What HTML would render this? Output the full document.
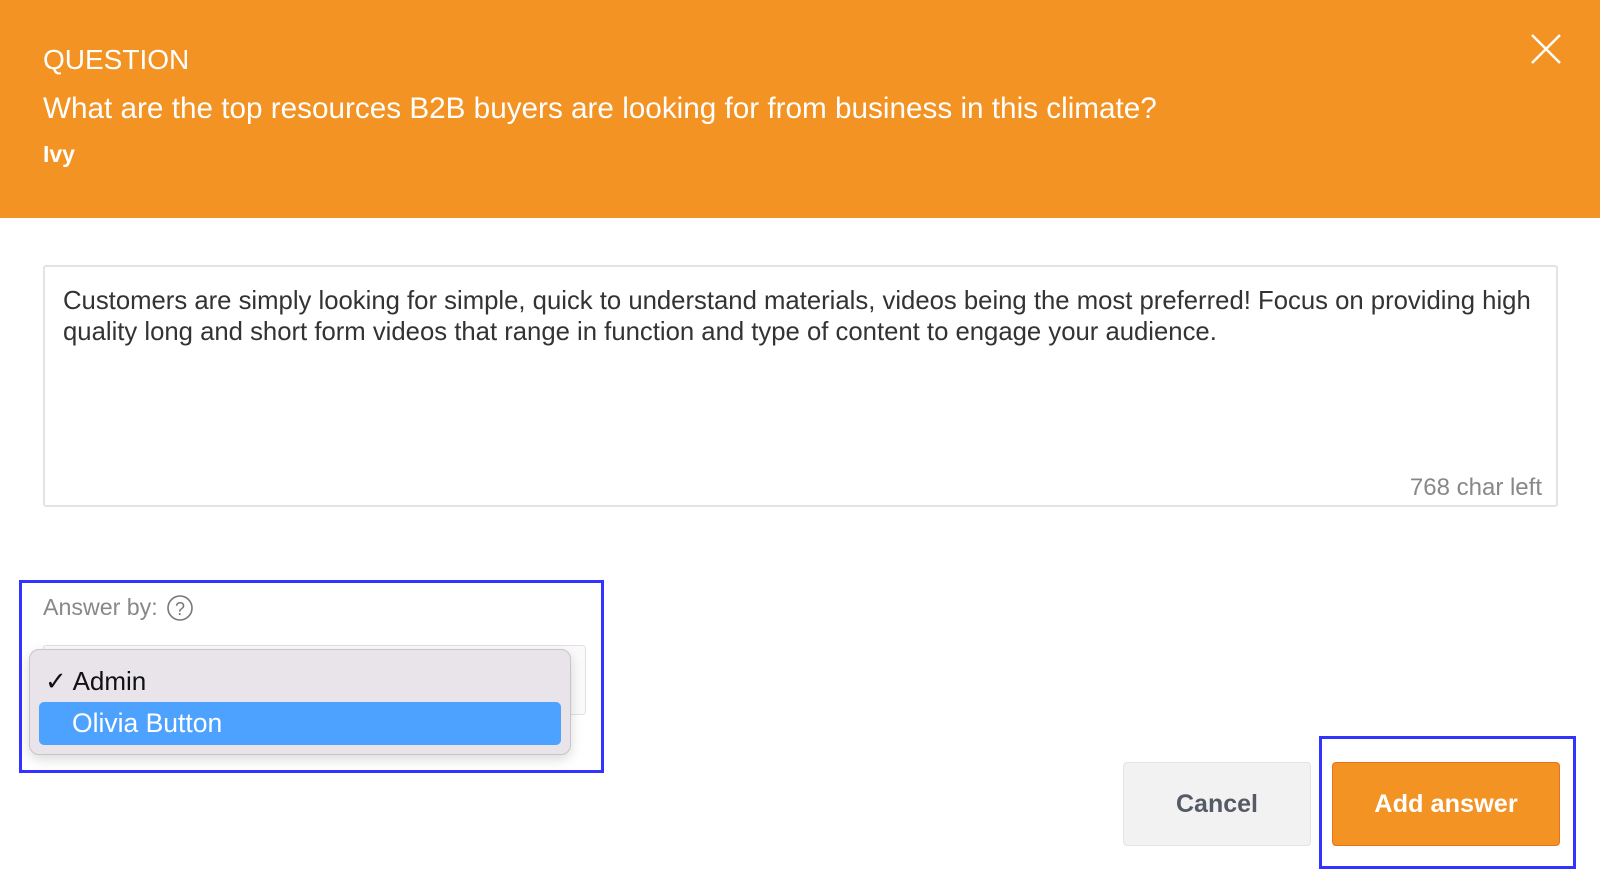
<!DOCTYPE html>
<html><head><meta charset="utf-8"><style>
*{margin:0;padding:0;box-sizing:border-box}
body{width:1600px;height:890px;background:#fff;font-family:"Liberation Sans",Arial,sans-serif;position:relative;overflow:hidden}
.hdr{position:absolute;left:0;top:0;width:1600px;height:218px;background:#F29323;color:#fff}
.abs{position:absolute;white-space:nowrap}
</style></head><body>
<div class="hdr">
<div class="abs" style="left:43px;top:44px;font-size:28px">QUESTION</div>
<div class="abs" style="left:43px;top:92px;font-size:29.7px">What are the top resources B2B buyers are looking for from business in this climate?</div>
<div class="abs" style="left:43px;top:141px;font-size:23px;font-weight:bold">Ivy</div>
<svg class="abs" style="left:1530px;top:33px" width="32" height="32"><path d="M2 2L30 30M30 2L2 30" stroke="#fff" stroke-width="2.5"/></svg>
</div>
<div class="abs" style="left:43px;top:265px;width:1515px;height:242px;border:2px solid #e4e4e4;border-radius:3px"></div>
<div class="abs" style="left:63px;top:286px;font-size:25.7px;line-height:30.6px;color:#333;white-space:normal;width:1490px">Customers are simply looking for simple, quick to understand materials, videos being the most preferred! Focus on providing high quality long and short form videos that range in function and type of content to engage your audience.</div>
<div class="abs" style="right:58px;top:474px;font-size:24px;color:#888">768 char left</div>

<div class="abs" style="left:19px;top:580px;width:585px;height:193px;border:3px solid #3333ff"></div>
<div class="abs" style="left:43px;top:594px;font-size:23.2px;color:#888">Answer by:</div>
<svg class="abs" style="left:166px;top:594px" width="28" height="28"><circle cx="14" cy="14" r="12" fill="none" stroke="#777" stroke-width="1.6"/><text x="14" y="21" font-size="18" text-anchor="middle" fill="#777" font-family="Liberation Sans">?</text></svg>
<div class="abs" style="left:43px;top:645px;width:543px;height:70px;border:1px solid #e2e2e2;border-radius:3px;background:#fafafa"></div>
<div class="abs" style="left:29px;top:649px;width:542px;height:106px;background:#e8e4ea;border:1px solid #c8c4ca;border-radius:10px;box-shadow:0 4px 12px rgba(0,0,0,.15)"></div>
<div class="abs" style="left:45px;top:666px;font-size:26px;color:#111">✓ Admin</div>
<div class="abs" style="left:39px;top:702px;width:522px;height:43px;background:#4da1ff;border-radius:5px"></div>
<div class="abs" style="left:72px;top:708px;font-size:26.5px;color:#fff">Olivia Button</div>

<div class="abs" style="left:1123px;top:762px;width:188px;height:84px;background:#f2f2f2;border:1px solid #e3e3e3;border-radius:4px;color:#555a66;font-size:25px;font-weight:bold;text-align:center;line-height:82px">Cancel</div>
<div class="abs" style="left:1319px;top:736px;width:257px;height:133px;border:3px solid #3333ff"></div>
<div class="abs" style="left:1332px;top:762px;width:228px;height:84px;background:#F29323;border:1px solid #e8711e;border-radius:4px;color:#fff;font-size:25.3px;font-weight:bold;text-align:center;line-height:82px">Add answer</div>
</body></html>
